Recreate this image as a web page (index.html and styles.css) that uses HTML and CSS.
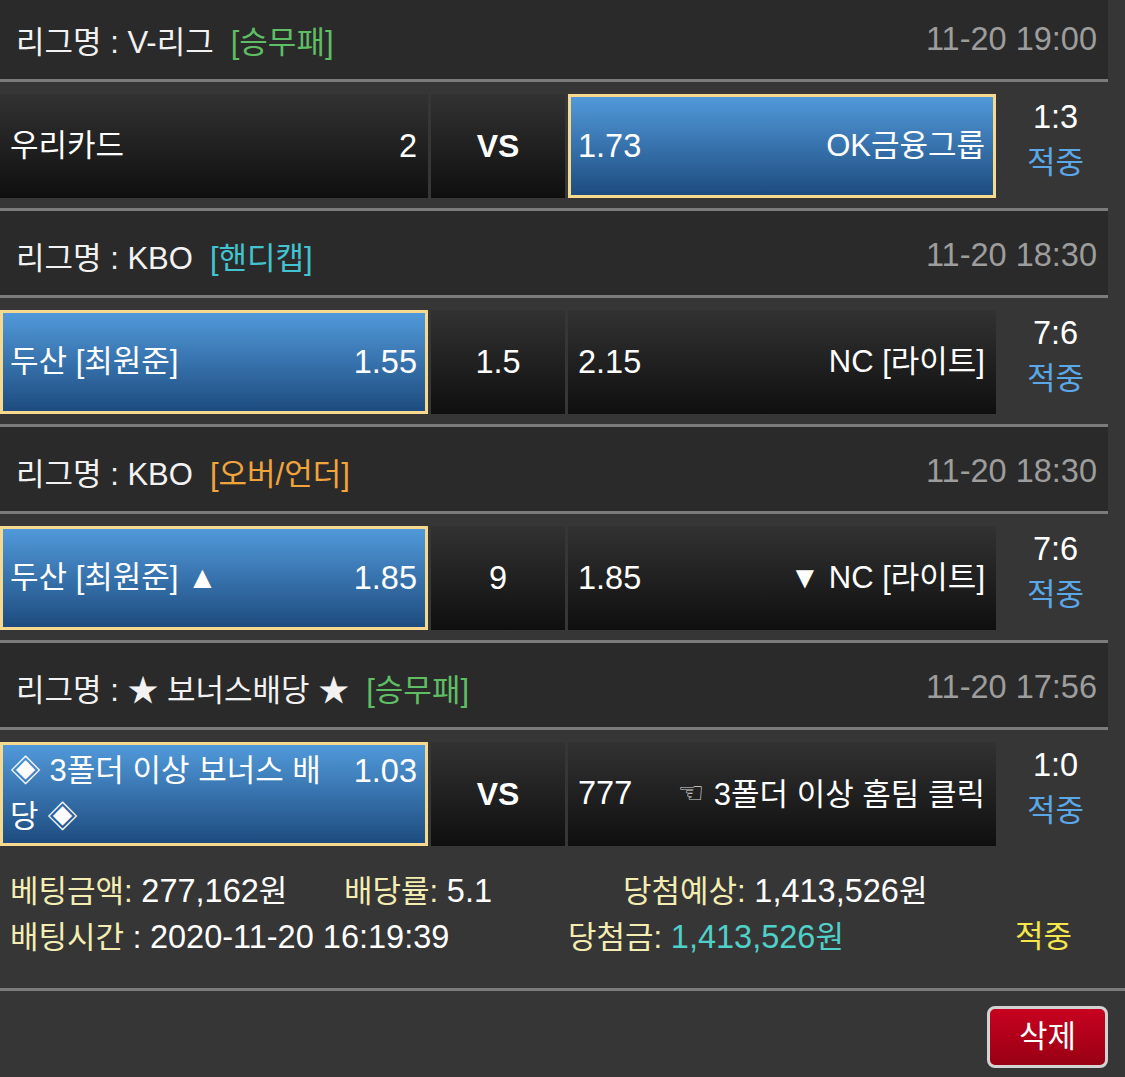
FILE: index.html
```html
<!DOCTYPE html>
<html lang="ko">
<head>
<meta charset="utf-8">
<title>베팅내역</title>
<link rel="stylesheet" href="styles.css">
</head>
<body>
<div class="slip">
  <section class="game">
    <header class="league"><span class="lname">리그명 : V-리그</span><span class="tag t-green">[승무패]</span><span class="date">11-20 19:00</span></header>
    <div class="match">
      <div class="pick"><div class="line"><span class="nm">우리카드</span><span class="od">2</span></div></div>
      <div class="pick mid"><span class="vs">VS</span></div>
      <div class="pick sel"><div class="line"><span class="od">1.73</span><span class="nm">OK금융그룹</span></div></div>
      <div class="result"><div class="sc">1:3</div><div class="hit">적중</div></div>
    </div>
  </section>
  <section class="game">
    <header class="league"><span class="lname">리그명 : KBO</span><span class="tag t-cyan">[핸디캡]</span><span class="date">11-20 18:30</span></header>
    <div class="match">
      <div class="pick sel"><div class="line"><span class="nm">두산 [최원준]</span><span class="od">1.55</span></div></div>
      <div class="pick mid"><span class="num">1.5</span></div>
      <div class="pick"><div class="line"><span class="od">2.15</span><span class="nm">NC [라이트]</span></div></div>
      <div class="result"><div class="sc">7:6</div><div class="hit">적중</div></div>
    </div>
  </section>
  <section class="game">
    <header class="league"><span class="lname">리그명 : KBO</span><span class="tag t-orange">[오버/언더]</span><span class="date">11-20 18:30</span></header>
    <div class="match">
      <div class="pick sel"><div class="line"><span class="nm">두산 [최원준] ▲</span><span class="od">1.85</span></div></div>
      <div class="pick mid"><span class="num">9</span></div>
      <div class="pick"><div class="line"><span class="od">1.85</span><span class="nm">▼ NC [라이트]</span></div></div>
      <div class="result"><div class="sc">7:6</div><div class="hit">적중</div></div>
    </div>
  </section>
  <section class="game">
    <header class="league"><span class="lname">리그명 : ★ 보너스배당 ★</span><span class="tag t-green">[승무패]</span><span class="date">11-20 17:56</span></header>
    <div class="match">
      <div class="pick sel"><div class="line"><span class="nm">◈ 3폴더 이상 보너스 배<br>당 ◈</span><span class="od">1.03</span></div></div>
      <div class="pick mid"><span class="vs">VS</span></div>
      <div class="pick"><div class="line"><span class="od">777</span><span class="nm"><span class="hand">☜</span>3폴더 이상 홈팀 클릭</span></div></div>
      <div class="result"><div class="sc">1:0</div><div class="hit">적중</div></div>
    </div>
  </section>
</div>
<div class="summary">
  <div class="sline">
    <span class="si w1"><span class="lbl">베팅금액:</span> <span class="num">277,162</span>원</span>
    <span class="si w2"><span class="lbl">배당률:</span> <span class="num">5.1</span></span>
    <span class="si"><span class="lbl">당첨예상:</span> <span class="num">1,413,526</span>원</span>
  </div>
  <div class="sline">
    <span class="si w3"><span class="lbl">배팅시간</span> : <span class="num">2020-11-20 16:19:39</span></span>
    <span class="si w4"><span class="lbl">당첨금:</span> <span class="won"><span class="num">1,413,526</span>원</span></span>
    <span class="si status">적중</span>
  </div>
</div>
<div class="actions">
  <button class="del" type="button">삭제</button>
</div>
</body>
</html>
```

FILE: styles.css
```css
* { box-sizing: border-box; }
html, body {
  margin: 0;
  padding: 0;
  background: #363636;
  color: #ffffff;
  font-family: "Liberation Sans", "Noto Sans CJK KR", sans-serif;
  font-size: 31px;
}
body { height: 1077px; overflow: hidden; }

.num, .od, .date, .sc { font-size: 32.5px; }

.slip {
  width: 1108px;
  margin-top: -5px;
}

.league {
  display: flex;
  align-items: center;
  height: 87px;
  padding: 4px 11px 0 16px;
  background: #2a2a2a;
  border-bottom: 3px solid #7b7b7b;
  color: #f2f2f2;
  white-space: nowrap;
}
.tag { margin-left: 17px; }
.t-green { color: #5fbd64; }
.t-cyan { color: #43c2cf; }
.t-orange { color: #f2a43c; }
.date {
  margin-left: auto;
  color: #9d9d9d;
}

.match {
  display: flex;
  gap: 3px;
  height: 129px;
  padding: 12px 0 10px;
  border-bottom: 3px solid #7b7b7b;
}
.game:last-child .match {
  height: 126px;
  border-bottom: 0;
}

.pick {
  flex: none;
  width: 428px;
  height: 104px;
  display: flex;
  align-items: center;
  padding: 0 8px 0 7px;
  border: 3px solid transparent;
  background: linear-gradient(#323232, #0f0f0f) border-box;
  color: #ffffff;
}
.pick.mid {
  width: 134px;
  justify-content: center;
  padding: 0;
}
.pick.sel {
  border-color: #f4d98f;
  background: linear-gradient(#5199da, #1d4c7f);
}
.line {
  display: flex;
  align-items: flex-start;
  justify-content: space-between;
  width: 100%;
  line-height: 46px;
  white-space: nowrap;
}
.vs {
  font-weight: bold;
  font-size: 32px;
}
.hand {
  font-family: "DejaVu Sans", sans-serif;
  font-size: 30px;
  color: #d8d8d8;
  margin-right: 9px;
  vertical-align: 2px;
}

.result {
  flex: none;
  width: 109px;
  margin-left: -3px;
  padding-left: 10px;
  text-align: center;
  line-height: 46px;
}
.hit { color: #5ba8e8; }

.summary {
  height: 132px;
  padding: 12px 0 0 10px;
}
.sline {
  display: flex;
  height: 46px;
  line-height: 46px;
  white-space: nowrap;
}
.si { flex: none; }
.w1 { width: 334px; }
.w2 { width: 279px; }
.w3 { width: 558px; }
.w4 { width: 447px; }
.lbl { color: #f4edb2; }
.won { color: #4fd0c8; }
.status { color: #f5e64c; }

.actions {
  display: flex;
  justify-content: flex-end;
  padding: 15px 17px 0 0;
  border-top: 3px solid #7b7b7b;
}
.del {
  width: 121px;
  height: 62px;
  border: 3px solid #d3d3d3;
  border-radius: 8px;
  background: linear-gradient(#c8021f, #980014);
  color: #ffffff;
  font-family: "Noto Sans CJK KR", sans-serif;
  font-size: 31px;
  padding: 0 0 8px;
  line-height: 1;
}
```
